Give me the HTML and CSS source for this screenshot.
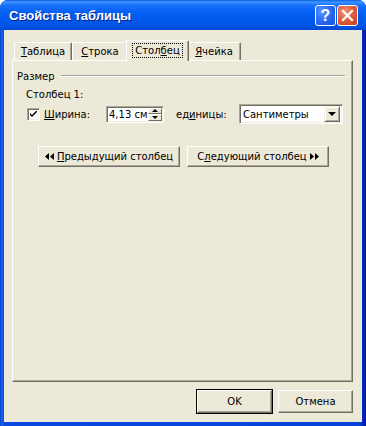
FILE: index.html
```html
<!DOCTYPE html>
<html lang="ru">
<head>
    <meta charset="UTF-8">
    <meta name="viewport" content="width=device-width, initial-scale=1.0">
    <title>Свойства таблицы</title>
    <link rel="stylesheet" href="styles.css">
</head>
<body>
    <div class="window">
        <div class="titlebar">
            <span class="title">Свойства таблицы</span>
            <div class="caption-buttons">
                <span class="caption-btn help">?</span>
                <span class="caption-btn close">
                    <svg width="13" height="13" viewBox="0 0 13 13">
                        <path d="M2 2 L11 11 M11 2 L2 11" stroke="#fff" stroke-width="2.2" stroke-linecap="square"/>
                    </svg>
                </span>
            </div>
        </div>

        <div class="client">
            <div class="tabs">
                <div class="tab tab-table"><u>Т</u>аблица</div>
                <div class="tab tab-row"><u>С</u>трока</div>
                <div class="tab tab-col active"><span class="focus">Стол<u>б</u>ец</span></div>
                <div class="tab tab-cell"><u>Я</u>чейка</div>
            </div>

            <div class="panel">
                <div class="group-title">
                    <span>Размер</span>
                    <span class="rule"></span>
                </div>

                <div class="col-label">Столбец 1:</div>

                <div class="size-row">
                    <span class="checkbox">
                        <svg width="7" height="7" viewBox="0 0 7 7">
                            <path d="M0 2 L0 4 L2 6 L7 1 L7 -1 L2 4 Z" fill="#000"/>
                        </svg>
                    </span>
                    <span class="label width-label"><u>Ш</u>ирина:</span>
                    <div class="spin">
                        <span class="spin-text">4,13 см</span>
                        <div class="spin-buttons">
                            <span class="spin-btn"><span class="tri-up"></span></span>
                            <span class="spin-btn"><span class="tri-down"></span></span>
                        </div>
                    </div>
                    <span class="label units-label">ед<u>и</u>ницы:</span>
                    <div class="combo">
                        <span class="combo-text">Сантиметры</span>
                        <span class="combo-btn"><span class="tri-down"></span></span>
                    </div>
                </div>

                <div class="nav-row">
                    <button class="btn nav-btn">
                        <svg width="9" height="7" viewBox="0 0 9 7"><path d="M4 0 L4 7 L0 3.5 Z M9 0 L9 7 L5 3.5 Z" fill="#000"/></svg>
                        <span><u>П</u>редыдущий столбец</span>
                    </button>
                    <button class="btn nav-btn">
                        <span>С<u>л</u>едующий столбец</span>
                        <svg width="9" height="7" viewBox="0 0 9 7"><path d="M0 0 L0 7 L4 3.5 Z M5 0 L5 7 L9 3.5 Z" fill="#000"/></svg>
                    </button>
                </div>
            </div>

            <div class="footer">
                <button class="btn dialog-btn default">OK</button>
                <button class="btn dialog-btn">Отмена</button>
            </div>
        </div>
    </div>
</body>
</html>
```

FILE: styles.css
```css
body {
    margin: 0;
    padding: 0;
    background-color: #fff;
    font-family: "DejaVu Sans", Verdana, sans-serif;
    font-size: 10px;
    color: #000;
}

.window {
    width: 366px;
    height: 426px;
    box-sizing: border-box;
    display: flex;
    flex-direction: column;
    background: linear-gradient(to right, #0838c8 0, #166cf4 2px, #0a48e0 4px, #0842d8 360px, #0026b8 363px, #001a9c 366px);
    border-radius: 8px 8px 0 0;
}

.titlebar {
    height: 30px;
    display: flex;
    align-items: center;
    justify-content: space-between;
    padding: 0 8px 0 9px;
    border-radius: 8px 8px 0 0;
    background: linear-gradient(to bottom, #0a5ce4 0, #3f97ff 2px, #1a72fc 5px, #0660f4 12px, #0058ec 20px, #0454e4 26px, #0046d2 30px);
}

.title {
    color: #fff;
    font-family: "Liberation Sans", Arial, sans-serif;
    font-weight: bold;
    font-size: 13px;
    text-shadow: 1px 1px 0 #0a1e8a;
    margin-top: 1px;
}

.caption-buttons {
    display: flex;
    gap: 1px;
    margin-top: 1px;
}

.caption-btn {
    width: 19px;
    height: 19px;
    border: 1px solid #fff;
    border-radius: 3px;
    display: flex;
    align-items: center;
    justify-content: center;
}

.help {
    background: radial-gradient(circle at 30% 30%, #5b96ff 0, #2b6ef5 45%, #1550e0 100%);
    color: #fff;
    font-family: "Liberation Sans", sans-serif;
    font-weight: bold;
    font-size: 16px;
}

.close {
    background: radial-gradient(circle at 35% 30%, #f39479 0, #e2603c 45%, #c9401c 100%);
}

.client {
    flex: 1;
    margin: 0 4px 4px 4px;
    padding: 10px 9px 0 8px;
    background-color: #ece9d8;
}

.tabs {
    display: flex;
    align-items: flex-end;
    height: 20px;
    padding-left: 2px;
    position: relative;
    z-index: 1;
}

.tab {
    box-sizing: border-box;
    height: 18px;
    border-top: 1px solid #fff;
    border-left: 1px solid #fff;
    border-right: 1px solid #716f64;
    box-shadow: inset -1px 0 0 #aca899;
    border-radius: 2px 2px 0 0;
    text-align: center;
    line-height: 17px;
    background-color: #ece9d8;
}

.tab-table { width: 58px; }
.tab-row { width: 56px; }
.tab-cell { width: 54px; }

.tab-col {
    width: 63px;
    margin: 0 -2px -1px -2px;
    height: 21px;
    position: relative;
    z-index: 2;
    line-height: 19px;
}

.focus {
    border: 1px dotted #000;
    padding: 1px 2px;
}

.panel {
    height: 322px;
    box-sizing: border-box;
    border-top: 1px solid #fff;
    border-left: 1px solid #fff;
    border-right: 1px solid #716f64;
    border-bottom: 1px solid #716f64;
    box-shadow: inset -1px -1px 0 #aca899;
    padding: 8px 7px 0 4px;
}

.group-title {
    display: flex;
    align-items: center;
    gap: 6px;
    height: 14px;
}

.rule {
    flex: 1;
    border-top: 1px solid #aca899;
    border-bottom: 1px solid #fff;
}

.col-label {
    margin: 5px 0 0 9px;
    height: 14px;
    line-height: 14px;
}

.size-row {
    display: flex;
    align-items: center;
    margin: 2px 0 0 10px;
    height: 20px;
}

.checkbox {
    width: 13px;
    height: 13px;
    box-sizing: border-box;
    background-color: #fff;
    border-top: 1px solid #aca899;
    border-left: 1px solid #aca899;
    border-right: 1px solid #fff;
    border-bottom: 1px solid #fff;
    box-shadow: inset 1px 1px 0 #716f64, inset -1px -1px 0 #f1efe2;
    display: flex;
    align-items: center;
    justify-content: center;
}

.width-label {
    margin-left: 4px;
    width: 62px;
}

.spin {
    width: 58px;
    height: 17px;
    box-sizing: border-box;
    display: flex;
    align-items: center;
    justify-content: space-between;
    background-color: #fff;
    border-top: 1px solid #aca899;
    border-left: 1px solid #aca899;
    border-right: 1px solid #fff;
    border-bottom: 1px solid #fff;
    box-shadow: inset 1px 1px 0 #716f64, inset -1px -1px 0 #f1efe2;
    padding: 0 1px 0 2px;
}

.spin-buttons {
    display: flex;
    flex-direction: column;
    height: 13px;
}

.spin-btn {
    width: 14px;
    height: 6px;
    flex: 1;
    box-sizing: border-box;
    background-color: #ece9d8;
    border-top: 1px solid #fff;
    border-left: 1px solid #fff;
    border-right: 1px solid #716f64;
    border-bottom: 1px solid #716f64;
    display: flex;
    align-items: center;
    justify-content: center;
}

.tri-up {
    width: 0;
    height: 0;
    border-left: 3px solid transparent;
    border-right: 3px solid transparent;
    border-bottom: 3px solid #000;
}

.tri-down {
    width: 0;
    height: 0;
    border-left: 3px solid transparent;
    border-right: 3px solid transparent;
    border-top: 3px solid #000;
}

.units-label {
    margin-left: 12px;
    width: 63px;
}

.combo {
    width: 104px;
    height: 20px;
    box-sizing: border-box;
    display: flex;
    align-items: center;
    justify-content: space-between;
    background-color: #fff;
    border-top: 1px solid #aca899;
    border-left: 1px solid #aca899;
    border-right: 1px solid #fff;
    border-bottom: 1px solid #fff;
    box-shadow: inset 1px 1px 0 #716f64, inset -1px -1px 0 #f1efe2;
    padding: 0 2px 0 3px;
}

.combo-btn {
    width: 16px;
    height: 16px;
    box-sizing: border-box;
    background-color: #ece9d8;
    border-top: 1px solid #f1efe2;
    border-left: 1px solid #f1efe2;
    border-right: 1px solid #716f64;
    border-bottom: 1px solid #716f64;
    box-shadow: inset 1px 1px 0 #fff, inset -1px -1px 0 #aca899;
    display: flex;
    align-items: center;
    justify-content: center;
}

.combo-btn .tri-down {
    border-left-width: 4px;
    border-right-width: 4px;
    border-top-width: 4px;
}

.nav-row {
    display: flex;
    gap: 7px;
    margin: 22px 0 0 21px;
}

.btn {
    font-family: inherit;
    font-size: 10px;
    font-weight: normal;
    color: #000;
    background-color: #ece9d8;
    box-sizing: border-box;
    border-top: 1px solid #fff;
    border-left: 1px solid #fff;
    border-right: 1px solid #716f64;
    border-bottom: 1px solid #716f64;
    box-shadow: inset -1px -1px 0 #aca899;
    border-radius: 0;
    padding: 0;
    margin: 0;
}

.nav-btn {
    width: 142px;
    height: 21px;
    display: flex;
    align-items: center;
    justify-content: center;
    gap: 3px;
}

.footer {
    display: flex;
    justify-content: flex-end;
    gap: 6px;
    padding: 8px 0 0 0;
}

.dialog-btn {
    width: 75px;
    height: 23px;
}

.dialog-btn.default {
    outline: 1px solid #000;
    outline-offset: 0;
}
```
